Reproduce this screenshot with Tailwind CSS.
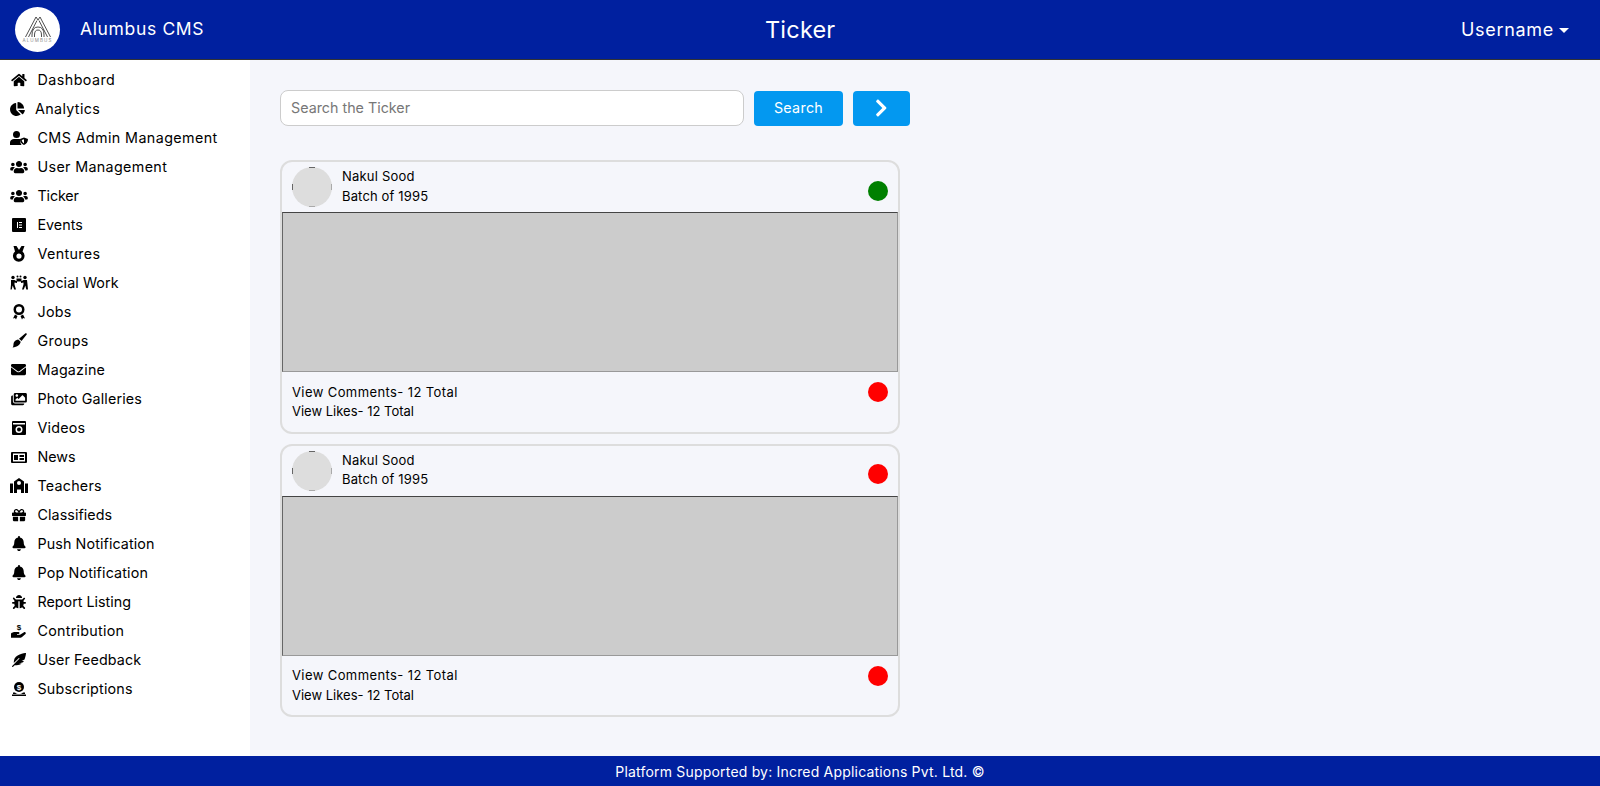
<!DOCTYPE html>
<html><head><meta charset="utf-8"><title>Ticker</title>
<script src="https://cdn.jsdelivr.net/npm/@tailwindcss/browser@4"></script></head>
<body class="m-0 bg-[#f5f6fb] font-['Inter','Liberation_Sans',sans-serif] text-black">
<div class="flex h-[786px] w-[1600px] flex-col overflow-hidden">
<header class="relative flex h-[60px] shrink-0 items-center border-b border-[#333] bg-[#00209f] text-white">
  <div class="ml-[15px] flex h-[45px] w-[45px] flex-col items-center justify-center rounded-full bg-white">
    <svg viewBox="0 0 26 21" class="mt-[1px] h-[21px] w-[26px]" fill="none" stroke="#222" stroke-width="0.8"><path d="M0.500 21 L11 1 L13 4 L15 1 L25.500 21M3.500 21 L12 4.500M22.500 21 L14 4.500M7 21 V19 Q7 11 13 11 Q19 11 19 19 V21M9.500 21 V19 Q9.500 14 13 14 Q16.500 14 16.500 19 V21"/></svg>
    <span class="text-[4.500px] leading-[7px] tracking-[1.100px] text-[#888]">ALUMBUS</span>
  </div>
  <span class="ml-[20px] text-[17.5px] tracking-[0.65px]">Alumbus CMS</span>
  <span class="absolute left-[765px] text-[23.5px] tracking-[0.2px]">Ticker</span>
  <div class="ml-auto mr-[31px] flex items-center gap-[5px]">
    <span class="text-[18px] tracking-[0.7px]">Username</span>
    <span class="mt-[1px] h-0 w-0 border-x-[5px] border-t-[5px] border-x-transparent border-t-white"></span>
  </div>
</header>
<div class="flex min-h-0 flex-1">
<aside class="w-[250px] shrink-0 bg-white pt-[5px] text-[14.3px] tracking-[0.35px]">
  <ul>
    <li class="flex h-[29px] items-center tracking-[0.45px]"><svg viewBox="0 0 576 512" class="ml-[11px] mr-[10.500px] w-[16px] h-[14px]"><path d="M280.37 148.26L96 300.11V464a16 16 0 0 0 16 16l112.06-.29a16 16 0 0 0 15.92-16V368a16 16 0 0 1 16-16h64a16 16 0 0 1 16 16v95.64a16 16 0 0 0 16 16.05L464 480a16 16 0 0 0 16-16V300L295.67 148.26a12.19 12.19 0 0 0-15.3 0zM571.6 251.47L488 182.56V44.05a12 12 0 0 0-12-12h-56a12 12 0 0 0-12 12v72.61L318.47 43a48 48 0 0 0-61 0L4.34 251.47a12 12 0 0 0-1.6 16.9l25.5 31A12 12 0 0 0 45.15 301l235.22-193.74a12.19 12.19 0 0 1 15.3 0L530.9 301a12 12 0 0 0 16.9-1.6l25.5-31a12 12 0 0 0-1.7-16.93z"/></svg>Dashboard</li>
    <li class="flex h-[29px] items-center"><svg viewBox="0 0 544 512" class="ml-[10px] mr-[10px] w-[15px] h-[14px]"><path d="M527.79 288H290.5l158.03 158.03c6.04 6.04 15.98 6.53 22.19.68 38.7-36.46 65.32-85.61 73.13-140.86 1.34-9.46-6.51-17.85-16.06-17.85zm-15.83-64.8C503.72 103.74 408.26 8.28 288.8.04 279.68-.59 272 7.1 272 16.24V240h223.77c9.14 0 16.82-7.68 16.19-16.8zM224 288V50.71c0-9.55-8.39-17.4-17.84-16.06C86.99 51.49-4.1 155.6.14 280.37 4.5 408.51 114.83 513.59 243.03 511.98c50.4-.63 96.97-16.87 135.26-44.03 7.9-5.6 8.42-17.23 1.57-24.08L224 288z"/></svg>Analytics</li>
    <li class="flex h-[29px] items-center tracking-[0.4px]"><svg viewBox="0 0 18 14" class="ml-[10px] mr-[9.500px] w-[18px] h-[14px]"><circle cx="6.5" cy="3.5" r="3.5"/><path d="M0 14v-2.5C0 9.5 2 8 4 8h5c1 0 1.5.3 1.5.3V12l1 2z"/><path fill-rule="evenodd" d="M14 6.5l4 1.5c0 3-1.500 5-4 6-2.500-1-4-3-4-6zM14 8.200l-2.300.8c.2 1.500 1 2.700 2.300 3.400z"/></svg>CMS Admin Management</li>
    <li class="flex h-[29px] items-center"><svg viewBox="0 0 640 512" class="ml-[10px] mr-[9.500px] w-[18px] h-[14px]"><path d="M96 224c35.3 0 64-28.7 64-64s-28.7-64-64-64-64 28.7-64 64 28.7 64 64 64zm448 0c35.3 0 64-28.7 64-64s-28.7-64-64-64-64 28.7-64 64 28.7 64 64 64zm32 32h-64c-17.6 0-33.5 7.1-45.1 18.6 40.3 22.1 68.9 62 75.1 109.4h66c17.7 0 32-14.3 32-32v-32c0-35.3-28.7-64-64-64zm-256 0c61.9 0 112-50.1 112-112S381.9 32 320 32 208 82.1 208 144s50.1 112 112 112zm76.8 32h-8.3c-20.8 10-43.9 16-68.5 16s-47.6-6-68.5-16h-8.3C179.6 288 128 339.6 128 403.2V432c0 26.5 21.5 48 48 48h288c26.5 0 48-21.500 48-48v-28.8c0-63.6-51.6-115.2-115.2-115.2zm-223.7-13.4C161.5 263.1 145.6 256 128 256H64c-35.3 0-64 28.7-64 64v32c0 17.7 14.3 32 32 32h65.9c6.3-47.4 34.9-87.3 75.2-109.4z"/></svg>User Management</li>
    <li class="flex h-[29px] items-center tracking-[-0.15px]"><svg viewBox="0 0 640 512" class="ml-[10px] mr-[9.500px] w-[18px] h-[14px]"><path d="M96 224c35.3 0 64-28.7 64-64s-28.7-64-64-64-64 28.7-64 64 28.7 64 64 64zm448 0c35.3 0 64-28.7 64-64s-28.7-64-64-64-64 28.7-64 64 28.7 64 64 64zm32 32h-64c-17.6 0-33.5 7.1-45.1 18.6 40.3 22.1 68.9 62 75.1 109.4h66c17.7 0 32-14.3 32-32v-32c0-35.3-28.7-64-64-64zm-256 0c61.9 0 112-50.1 112-112S381.9 32 320 32 208 82.1 208 144s50.1 112 112 112zm76.8 32h-8.3c-20.8 10-43.9 16-68.5 16s-47.6-6-68.5-16h-8.3C179.6 288 128 339.6 128 403.2V432c0 26.5 21.5 48 48 48h288c26.5 0 48-21.500 48-48v-28.8c0-63.6-51.6-115.2-115.2-115.2zm-223.7-13.4C161.5 263.1 145.6 256 128 256H64c-35.3 0-64 28.7-64 64v32c0 17.7 14.3 32 32 32h65.9c6.3-47.4 34.9-87.3 75.2-109.4z"/></svg>Ticker</li>
    <li class="flex h-[29px] items-center tracking-[0px]"><svg viewBox="0 0 14 14" class="ml-[12px] mr-[11.500px] w-[14px] h-[14px]"><path fill-rule="evenodd" d="M1 0h12a1 1 0 0 1 1 1v12a1 1 0 0 1-1 1H1a1 1 0 0 1-1-1V1a1 1 0 0 1 1-1zM5 4v6h1V4zM7 4v1h3V4zM7 6.500v1h3v-1zM7 9v1h3V9z"/></svg>Events</li>
    <li class="flex h-[29px] items-center"><svg viewBox="0 0 16 16" class="ml-[11px] mr-[10.500px] w-[16px] h-[16px]"><path fill-rule="evenodd" d="M2.500 0h3l2.500 4 2.500-4h3l-2 5.500a5.800 5.800 0 1 1-7.500 0zM8 7.500a2.600 2.600 0 1 0 0 5.200A2.600 2.600 0 0 0 8 7.500z"/></svg>Ventures</li>
    <li class="flex h-[29px] items-center tracking-[0.07px]"><svg viewBox="0 0 18 15" class="ml-[10px] mr-[9.500px] w-[18px] h-[15px]"><circle cx="3" cy="2.500" r="1.700"/><circle cx="15" cy="2.500" r="1.700"/><circle cx="7.500" cy="1.500" r="1"/><circle cx="10.500" cy="1.500" r="1"/><path d="M1 5h3.500L7 6.500V8l-2.500-.5v2L6 14.500H4.200l-1.500-4-1 4H.5l.5-5zM17 5h-3.500L11 6.500V8l2.500-.5v2L12 14.500h1.800l1.500-4 1 4h1.700l-.5-5zM6.500 3.500h5v3h-5z"/></svg>Social Work</li>
    <li class="flex h-[29px] items-center tracking-[0.25px]"><svg viewBox="0 0 14 16" class="ml-[12px] mr-[11.500px] w-[14px] h-[16px]"><path fill-rule="evenodd" d="M7 0a5.500 5.500 0 1 1 0 11A5.500 5.500 0 0 1 7 0zm0 2.500a3 3 0 1 0 0 6 3 3 0 0 0 0-6z"/><path d="M3 10.500l2.500 1.500-1.500 3.500-1-1.500-2 .5zM11 10.500L8.500 12l1.500 3.500 1-1.500 2 .5z"/></svg>Jobs</li>
    <li class="flex h-[29px] items-center"><svg viewBox="0 0 15 15" class="ml-[12px] mr-[10.500px] w-[15px] h-[15px]"><path d="M13.500.3c.6-.5 1.700.4 1.200 1.200L9.500 8 7 5.700zM6.200 6.500l2.500 2.300c-.5 3-3.200 5.200-8.200 5.700 1.700-1.500.3-4.200 2-6 .8-1 2.200-1.700 3.700-2z"/></svg>Groups</li>
    <li class="flex h-[29px] items-center tracking-[0.22px]"><svg viewBox="0 0 512 512" class="ml-[11px] mr-[11.500px] w-[15px] h-[15px]"><path d="M502.3 190.8c3.900-3.100 9.700-.2 9.700 4.700V400c0 26.500-21.500 48-48 48H48c-26.500 0-48-21.500-48-48V195.600c0-5 5.700-7.800 9.700-4.700 22.400 17.400 52.100 39.500 154.100 113.600 21.100 15.400 56.700 47.800 92.200 47.600 35.700.3 72-32.800 92.300-47.600 102-74.100 131.600-96.300 154-113.700zM256 320c23.200.4 56.600-29.200 73.400-41.400 132.700-96.300 142.800-104.700 173.400-128.700 5.800-4.500 9.200-11.500 9.200-18.900v-19c0-26.500-21.500-48-48-48H48C21.500 64 0 85.500 0 112v19c0 7.400 3.400 14.300 9.200 18.900 30.600 23.900 40.700 32.400 173.400 128.700 16.800 12.200 50.200 41.800 73.400 41.400z"/></svg>Magazine</li>
    <li class="flex h-[29px] items-center tracking-[0.15px]"><svg viewBox="0 0 576 512" class="ml-[11px] mr-[10.500px] w-[16px] h-[14px]"><path d="M480 416v16c0 26.510-21.490 48-48 48H48c-26.510 0-48-21.490-48-48V176c0-26.510 21.490-48 48-48h16v208c0 44.112 35.888 80 80 80h336zm96-80V80c0-26.510-21.490-48-48-48H144c-26.510 0-48 21.490-48 48v256c0 26.510 21.490 48 48 48h384c26.510 0 48-21.490 48-48zM256 128c0 26.510-21.490 48-48 48s-48-21.490-48-48 21.490-48 48-48 48 21.490 48 48zm-96 144l55.515-55.515c4.686-4.686 12.284-4.686 16.971 0L272 256l135.515-135.515c4.686-4.686 12.284-4.686 16.971 0L512 208v112H160v-48z"/></svg>Photo Galleries</li>
    <li class="flex h-[29px] items-center tracking-[0.2px]"><svg viewBox="0 0 14 14" class="ml-[12px] mr-[11.500px] w-[14px] h-[14px]"><path fill-rule="evenodd" d="M1 0h12a1 1 0 0 1 1 1v12a1 1 0 0 1-1 1H1a1 1 0 0 1-1-1V1a1 1 0 0 1 1-1zM1 2v1.500h12V2zM7 5a3.500 3.500 0 1 0 0 7 3.500 3.500 0 0 0 0-7zm0 1.500a2 2 0 1 1 0 4 2 2 0 0 1 0-4z"/></svg>Videos</li>
    <li class="flex h-[29px] items-center tracking-[0px]"><svg viewBox="0 0 16 12" class="ml-[11px] mr-[10.500px] w-[16px] h-[12px]"><path fill-rule="evenodd" d="M1 1h14a1 1 0 0 1 1 1v9a1 1 0 0 1-1 1H1a1 1 0 0 1-1-1V2a1 1 0 0 1 1-1zm1 1.500v8h12v-8zM3 4h4v5H3zM8.500 4H13v2H8.500zM8.500 7H13v2H8.500z"/></svg>News</li>
    <li class="flex h-[29px] items-center tracking-[0.22px]"><svg viewBox="0 0 18 15" class="ml-[10px] mr-[9.500px] w-[18px] h-[15px]"><path fill-rule="evenodd" d="M9 0l5 3.500V15h-3v-3.500H7V15H4V3.500zM9 3a2 2 0 1 0 0 4 2 2 0 0 0 0-4zM0 5.500h3V15H0zM15 5.500h3V15h-3z"/></svg>Teachers</li>
    <li class="flex h-[29px] items-center tracking-[0.07px]"><svg viewBox="0 0 512 512" class="ml-[12px] mr-[11.500px] w-[14px] h-[14px]"><path d="M32 448c0 17.700 14.300 32 32 32h160V320H32v128zm256 32h160c17.700 0 32-14.300 32-32V320H288v160zm192-320h-42.100c6.200-12.100 10.100-25.500 10.100-40 0-48.500-39.500-88-88-88-41.600 0-68.500 21.300-103 68.300-34.500-47-61.400-68.300-103-68.300-48.500 0-88 39.500-88 88 0 14.500 3.800 27.900 10.100 40H32c-17.700 0-32 14.300-32 32v80c0 8.800 7.200 16 16 16h480c8.800 0 16-7.200 16-16v-80c0-17.700-14.300-32-32-32zm-326.100 0c-22.100 0-40-17.900-40-40s17.900-40 40-40c19.900 0 34.600 3.300 86.100 80h-86.100zm206.100 0h-86.100c51.400-76.500 65.700-80 86.100-80 22.100 0 40 17.900 40 40s-17.900 40-40 40z"/></svg>Classifieds</li>
    <li class="flex h-[29px] items-center tracking-[0.1px]"><svg viewBox="0 0 448 512" class="ml-[12px] mr-[11.500px] w-[14px] h-[15px]"><path d="M224 512c35.320 0 63.970-28.650 63.970-64H160.030c0 35.350 28.650 64 63.970 64zm215.390-149.710c-19.320-20.760-55.470-51.990-55.470-154.290 0-77.700-54.480-139.900-127.940-155.160V32c0-17.670-14.320-32-31.980-32s-31.980 14.330-31.980 32v20.840C118.560 68.100 64.080 130.300 64.080 208c0 102.300-36.150 133.530-55.470 154.290-6 6.450-8.660 14.160-8.610 21.710.11 16.400 12.980 32 32.100 32h383.800c19.120 0 32-15.600 32.100-32 .05-7.550-2.610-15.270-8.610-21.710z"/></svg>Push Notification</li>
    <li class="flex h-[29px] items-center tracking-[0.15px]"><svg viewBox="0 0 448 512" class="ml-[12px] mr-[11.500px] w-[14px] h-[15px]"><path d="M224 512c35.320 0 63.970-28.650 63.970-64H160.030c0 35.350 28.650 64 63.970 64zm215.390-149.710c-19.320-20.760-55.470-51.990-55.470-154.290 0-77.700-54.480-139.900-127.940-155.160V32c0-17.670-14.320-32-31.980-32s-31.980 14.330-31.980 32v20.840C118.560 68.100 64.080 130.300 64.080 208c0 102.300-36.150 133.530-55.470 154.290-6 6.450-8.660 14.160-8.610 21.710.11 16.400 12.980 32 32.100 32h383.800c19.120 0 32-15.600 32.100-32 .05-7.550-2.610-15.270-8.610-21.710z"/></svg>Pop Notification</li>
    <li class="flex h-[29px] items-center tracking-[0px]"><svg viewBox="0 0 512 512" class="ml-[12px] mr-[11.500px] w-[14px] h-[14px]"><path d="M511.988 288.900c-.478 17.430-15.217 31.100-32.653 31.100H424v16c0 21.864-4.882 42.584-13.600 61.145l60.228 60.228c12.496 12.497 12.496 32.758 0 45.255-12.498 12.497-32.759 12.496-45.256 0l-54.736-54.736C345.886 467.965 314.351 480 280 480V236c0-6.627-5.373-12-12-12h-24c-6.627 0-12 5.373-12 12v244c-34.351 0-65.886-12.035-90.636-32.108l-54.736 54.736c-12.498 12.497-32.759 12.496-45.256 0-12.496-12.497-12.496-32.758 0-45.255l60.228-60.228C92.882 378.584 88 357.864 88 336v-16H32.666C15.230 320 .491 306.330.013 288.900-.484 270.816 14.028 256 32 256h56v-58.745l-46.628-46.628c-12.496-12.497-12.496-32.758 0-45.255 12.498-12.497 32.758-12.497 45.256 0L141.255 160h229.489l54.627-54.627c12.498-12.497 32.758-12.497 45.256 0 12.496 12.497 12.496 32.758 0 45.255L424 197.255V256h56c17.972 0 32.484 14.816 31.988 32.900zM257 0c-61.856 0-112 50.144-112 112h224C369 50.144 318.856 0 257 0z"/></svg>Report Listing</li>
    <li class="flex h-[29px] items-center tracking-[0.27px]"><svg viewBox="0 0 16 15" class="ml-[11px] mr-[10.500px] w-[16px] h-[15px]"><path d="M0 10.500c1-1 2.500-1.500 4-1.500h3.500c1.300 0 1.300 2 0 2H6v.7h3l4-2.500c1.200-.7 2.500.7 1.500 1.700L11 14c-.5.500-1 .7-1.500.7H0z"/><text x="8" y="7" font-size="8" font-weight="700" font-family="Liberation Sans" text-anchor="middle">$</text></svg>Contribution</li>
    <li class="flex h-[29px] items-center tracking-[0.12px]"><svg viewBox="0 0 512 512" class="ml-[12px] mr-[11.500px] w-[14px] h-[14px]"><path d="M512 0C460.220 3.560 96.440 38.200 71.010 287.610c-3.090 26.660-4.840 53.440-5.990 80.240l178.870-178.690c6.250-6.250 16.400-6.250 22.650 0s6.250 16.380 0 22.630L7.040 471.030c-9.380 9.370-9.380 24.570 0 33.940 9.380 9.370 24.590 9.370 33.980 0l57.130-57.070c42.090-.14 84.150-2.530 125.960-7.360 53.480-5.440 97.020-26.470 132.580-56.540H255.740l146.790-48.880c11.250-14.890 21.370-30.710 30.450-47.120h-81.140l106.540-53.210C500.290 132.860 510.190 26.260 512 0z"/></svg>User Feedback</li>
    <li class="flex h-[29px] items-center tracking-[0.2px]"><svg viewBox="0 0 14 14" class="ml-[12px] mr-[11.500px] w-[14px] h-[14px]"><circle cx="7" cy="5" r="5"/><text x="7" y="8" font-size="8" font-weight="700" fill="#fff" font-family="Liberation Sans" text-anchor="middle">$</text><path d="M1 10.500h2c1 1 2.500 1.500 4 1.500s3-.5 4-1.500h2v1.500H1zM0 12.500h14V14H0z"/></svg>Subscriptions</li>
  </ul>
</aside>
<main class="flex-1 pl-[30px] pt-[30px]">
  <div class="flex items-center">
    <input placeholder="Search the Ticker" class="h-[36px] w-[464px] rounded-[8px] border border-[#ccc] bg-white px-[10px] pb-[1px] text-[14.3px] placeholder:text-[#777]">
    <button class="ml-[10px] h-[35px] w-[89px] rounded-[4px] bg-[#0398f0] text-[14.300px] tracking-[0.3px] text-white">Search</button>
    <button class="ml-[10px] flex h-[35px] w-[57px] items-center justify-center rounded-[4px] bg-[#0398f0]"><svg viewBox="0 0 320 512" class="h-[20px] w-[12.500px]" fill="#fff"><path d="M285.476 272.971L91.132 467.314c-9.373 9.373-24.569 9.373-33.941 0l-22.667-22.667c-9.357-9.357-9.375-24.522-.04-33.901L188.505 256 34.484 101.255c-9.335-9.379-9.317-24.544.04-33.901l22.667-22.667c9.373-9.373 24.569-9.373 33.941 0L285.475 239.030c9.373 9.372 9.373 24.568.001 33.941z"/></svg></button>
  </div>
  <div class="mt-[34px] flex w-[620px] flex-col gap-[10px] text-[13px]">
    <article class="h-[274px] rounded-[12px] border-2 border-[#ddd]">
      <div class="flex h-[50px] items-center pl-[10px] pr-[10px]">
        <div class="relative h-[40px] w-[40px] rounded-full bg-[#ddd]">
          <span class="absolute left-[17px] top-0 h-[1px] w-[6px] bg-[#666]"></span><span class="absolute left-0 top-[17px] h-[6px] w-[1px] bg-[#666]"></span><span class="absolute bottom-0 left-[17px] h-[1px] w-[6px] bg-[#aaa]"></span><span class="absolute right-0 top-[17px] h-[6px] w-[1px] bg-[#aaa]"></span>
        </div>
        <div class="mb-[2px] ml-[10px] leading-[20px]"><p class="tracking-[0.2px]">Nakul Sood</p><p class="tracking-[0.15px]">Batch of 1995</p></div>
        <span class="ml-auto mt-[8px] h-[20px] w-[20px] rounded-full bg-[#008000]"></span>
      </div>
      <div class="h-[160px] border border-t-[#444] border-l-[#666] border-r-[#999] border-b-[#999] bg-[#ccc]"></div>
      <div class="flex items-start pl-[10px] pr-[10px] pt-[10px]">
        <div class="mt-[1px] leading-[19px]"><p class="tracking-[0.4px]">View Comments- 12 Total</p><p>View Likes- 12 Total</p></div>
        <span class="ml-auto h-[20px] w-[20px] rounded-full bg-[#f00]"></span>
      </div>
    </article>
    <article class="h-[273px] rounded-[12px] border-2 border-[#ddd]">
      <div class="flex h-[50px] items-center pl-[10px] pr-[10px]">
        <div class="relative h-[40px] w-[40px] rounded-full bg-[#ddd]">
          <span class="absolute left-[17px] top-0 h-[1px] w-[6px] bg-[#666]"></span><span class="absolute left-0 top-[17px] h-[6px] w-[1px] bg-[#666]"></span><span class="absolute bottom-0 left-[17px] h-[1px] w-[6px] bg-[#aaa]"></span><span class="absolute right-0 top-[17px] h-[6px] w-[1px] bg-[#aaa]"></span>
        </div>
        <div class="mb-[2px] ml-[10px] leading-[19px]"><p class="tracking-[0.2px]">Nakul Sood</p><p class="tracking-[0.15px]">Batch of 1995</p></div>
        <span class="ml-auto mt-[6px] h-[20px] w-[20px] rounded-full bg-[#f00]"></span>
      </div>
      <div class="h-[160px] border border-t-[#444] border-l-[#666] border-r-[#999] border-b-[#999] bg-[#ccc]"></div>
      <div class="flex items-start pl-[10px] pr-[10px] pt-[10px]">
        <div class="-mt-[1px] leading-[20px]"><p class="tracking-[0.4px]">View Comments- 12 Total</p><p>View Likes- 12 Total</p></div>
        <span class="ml-auto h-[20px] w-[20px] rounded-full bg-[#f00]"></span>
      </div>
    </article>
  </div>
</main>
</div>
<footer class="flex h-[30px] shrink-0 items-center justify-center bg-[#00209f] text-[14px] tracking-[0.19px] text-white">Platform Supported by: Incred Applications Pvt. Ltd. ©</footer>
</div>
</body></html>
